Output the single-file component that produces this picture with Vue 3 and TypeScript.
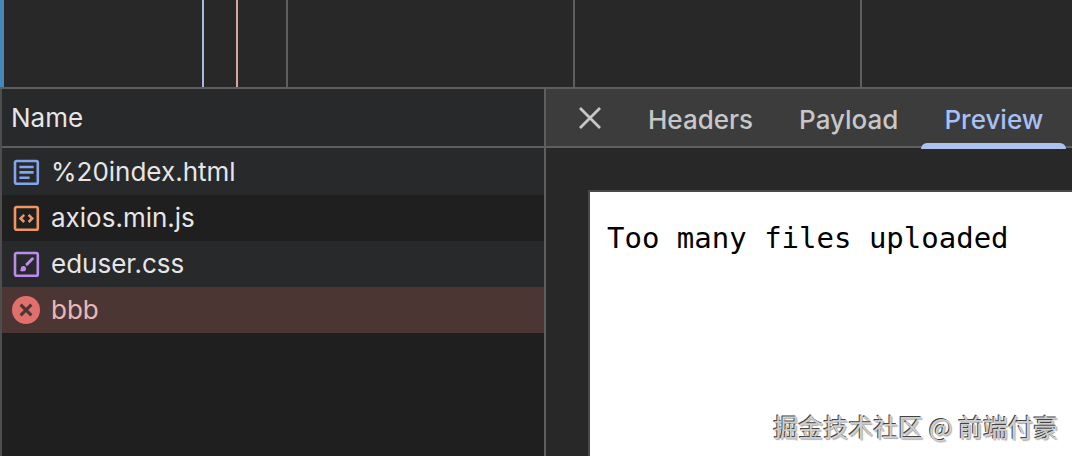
<script setup lang="ts">
import { ref } from 'vue'

type Kind = 'document' | 'script' | 'style' | 'error'
interface NetworkRequest { name: string; kind: Kind }

const requests: NetworkRequest[] = [
  { name: '%20index.html', kind: 'document' },
  { name: 'axios.min.js', kind: 'script' },
  { name: 'eduser.css', kind: 'style' },
  { name: 'bbb', kind: 'error' },
]
const tabs: string[] = ['Headers', 'Payload', 'Preview']
const activeTab = ref<string>('Preview')
</script>

<template>
  <div class="network">
    <div class="timeline">
      <span class="cell first"></span>
      <span class="cell loaded"></span>
      <span class="cell finished"></span>
      <span class="cell wide"></span>
      <span class="cell wide"></span>
      <span class="cell last"></span>
    </div>
    <main class="split">
      <section class="requests">
        <table>
          <thead>
            <tr><th scope="col">Name</th></tr>
          </thead>
          <tbody>
            <tr v-for="item in requests" :key="item.name" :class="{ failed: item.kind === 'error' }">
              <td>
                <div class="entry">
                  <svg class="icon" :class="item.kind" viewBox="0 0 28 28" aria-hidden="true">
                    <template v-if="item.kind !== 'error'">
                      <rect x="3" y="3" width="22.800" height="22.800" rx="1.600" />
                    </template>
                    <path v-if="item.kind === 'document'" d="M7.400 9h14.200M7.400 14.400h14.200M7.400 19.800h10.200" />
                    <path v-else-if="item.kind === 'script'" d="M12.200 10.800 8.600 14.400l3.600 3.600M16.600 10.800l3.600 3.600-3.600 3.600" />
                    <template v-else-if="item.kind === 'style'">
                      <path d="M15 14.200 20.400 8.800" stroke-linecap="round" stroke-width="3" />
                      <path class="solid" d="M8 20.800c.8-.6.6-1.400.8-2.300a2.600 2.600 0 1 1 2.600 2.800c-1.200.2-2.400 0-3.400-.5Z" />
                    </template>
                    <template v-else>
                      <circle cx="14" cy="14" r="14" />
                      <path d="m8.600 8.600 10.800 10.800M19.400 8.600 8.600 19.400" />
                    </template>
                  </svg>
                  <span>{{ item.name }}</span>
                </div>
              </td>
            </tr>
          </tbody>
        </table>
      </section>
      <section class="details">
        <div class="toolbar">
          <button class="close" type="button" aria-label="Close">
            <svg viewBox="0 0 22 22" aria-hidden="true"><path d="m1 1 20 20M21 1 1 21" /></svg>
          </button>
          <div class="tabs" role="tablist">
            <button
              v-for="tab in tabs"
              :key="tab"
              type="button"
              role="tab"
              class="tab"
              :class="{ active: tab === activeTab }"
              :aria-selected="tab === activeTab"
              @click="activeTab = tab"
            >{{ tab }}</button>
          </div>
        </div>
        <div class="preview">
          <pre>Too many files uploaded</pre>
          <p class="watermark">掘金技术社区 @ 前端付豪</p>
        </div>
      </section>
    </main>
  </div>
</template>

<style>
body { background: #282828; }
</style>

<style scoped>
.network {
  display: flex;
  flex-direction: column;
  min-height: 100vh;
  overflow: hidden;
  background: #282828;
  color: #e6e6e6;
  font-family: Inter, "Liberation Sans", sans-serif;
  font-size: 26px;
}
.timeline { display: flex; height: 87px; border-bottom: 2px solid #5e5e5e; }
.cell { box-sizing: border-box; flex: none; border-right: 2px solid #5e5e5e; }
.first { width: 204px; border-left: 4px solid #4788b8; border-right-color: #a8b8e0; }
.loaded { width: 34px; border-right-color: #dda49f; }
.finished { width: 50px; }
.wide { width: 287px; }
.last { flex: 1; border-right: 0; }
.split { flex: 1; display: grid; grid-template-columns: minmax(0, 546fr) minmax(0, 526fr); }
.requests { background: #1f1f1f; border-left: 2px solid #4e4e4e; border-right: 2px solid #5e5e5e; }
table { width: 100%; border-collapse: separate; border-spacing: 0; }
th {
  height: 57px;
  padding: 0 9px;
  border-bottom: 2px solid #5e5e5e;
  background: #28292a;
  text-align: left;
  font-weight: 400;
}
td { height: 46px; padding: 0 10px; }
tbody tr:first-child td { height: 47px; }
tbody tr:nth-child(odd) { background: #28292a; }
tbody tr.failed { background: #4c3634; color: #e8b8b6; }
.entry { display: flex; align-items: center; gap: 11px; line-height: 30px; }
.icon { flex: none; width: 28px; height: 28px; fill: none; stroke-width: 2.6; }
.document { stroke: #84a5ed; }
.script { stroke: #f09560; }
.style { stroke: #bd8bef; }
.solid { fill: #bd8bef; stroke: none; }
.error { stroke: #4c3634; stroke-width: 3; }
.error circle { fill: #e0706b; stroke: none; }
.details { display: flex; flex-direction: column; }
.toolbar {
  display: flex;
  height: 57px;
  border-bottom: 2px solid #5e5e5e;
  background: #3c3c3c;
}
button { margin: 0; border: 0; background: none; font: inherit; cursor: pointer; }
.close { display: flex; align-items: center; padding: 0 24px 0 33px; color: #c7c7c7; }
.close svg { width: 22px; height: 22px; fill: none; stroke: currentColor; stroke-width: 2.8; }
.tabs { display: flex; }
.tab { position: relative; padding: 4px 23px 0; color: #c7c7c7; font-weight: 500; }
.tab.active { color: #a8c0f5; }
.tab.active::after {
  content: "";
  position: absolute;
  right: 0;
  bottom: -3px;
  left: 0;
  height: 6px;
  border-radius: 6px 6px 0 0;
  background: #acc2ef;
}
.preview {
  flex: 1;
  display: flex;
  flex-direction: column;
  justify-content: space-between;
  margin: 42px 0 0 42px;
  border-top: 2px solid #4a4a4a;
  border-left: 2px solid #4a4a4a;
  background: #fff;
  color: #000;
}
pre { margin: 0; padding: 29px 17px; font: 29px/34px "DejaVu Sans Mono", monospace; }
.watermark {
  margin: 0;
  padding: 0 14px 12px;
  color: #cecece;
  font: 25px/36px "Noto Sans CJK SC", sans-serif;
  text-align: right;
  text-shadow: -1px -1px 0 #444, 1px 1px 1px #aaa;
}
</style>
